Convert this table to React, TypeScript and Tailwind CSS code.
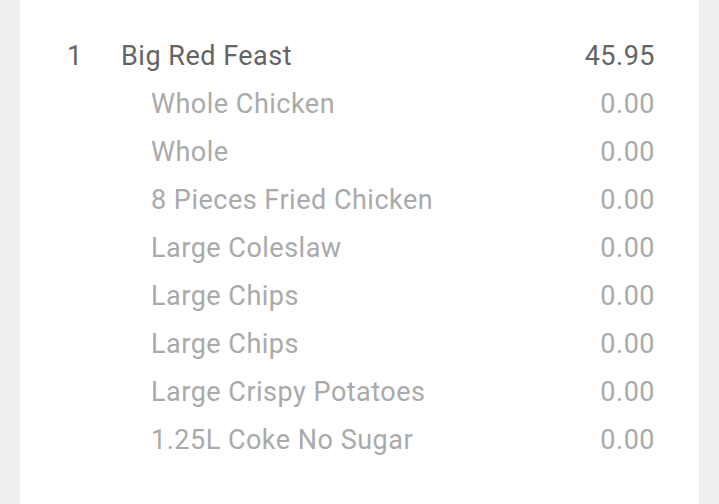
import React from "react";

const subItems = [
  "Whole Chicken",
  "Whole",
  "8 Pieces Fried Chicken",
  "Large Coleslaw",
  "Large Chips",
  "Large Chips",
  "Large Crispy Potatoes",
  "1.25L Coke No Sugar",
];

export default function App() {
  return (
    <div className="min-h-[504px] bg-[#efefef] px-5" style={{ fontFamily: "Roboto, sans-serif" }}>
      <div className="bg-white min-h-[504px] pt-[32px] pl-[47px] pr-[44px] text-[27px] leading-[48px] tracking-[0.5px]">
        <div className="flex text-[#646464]">
          <span className="w-[54px]">1</span>
          <span className="flex-1">Big Red Feast</span>
          <span>45.95</span>
        </div>
        {subItems.map((item, i) => (
          <div key={i} className="flex text-[#aaaaaa] pl-[84px]">
            <span className="flex-1">{item}</span>
            <span>0.00</span>
          </div>
        ))}
      </div>
    </div>
  );
}
